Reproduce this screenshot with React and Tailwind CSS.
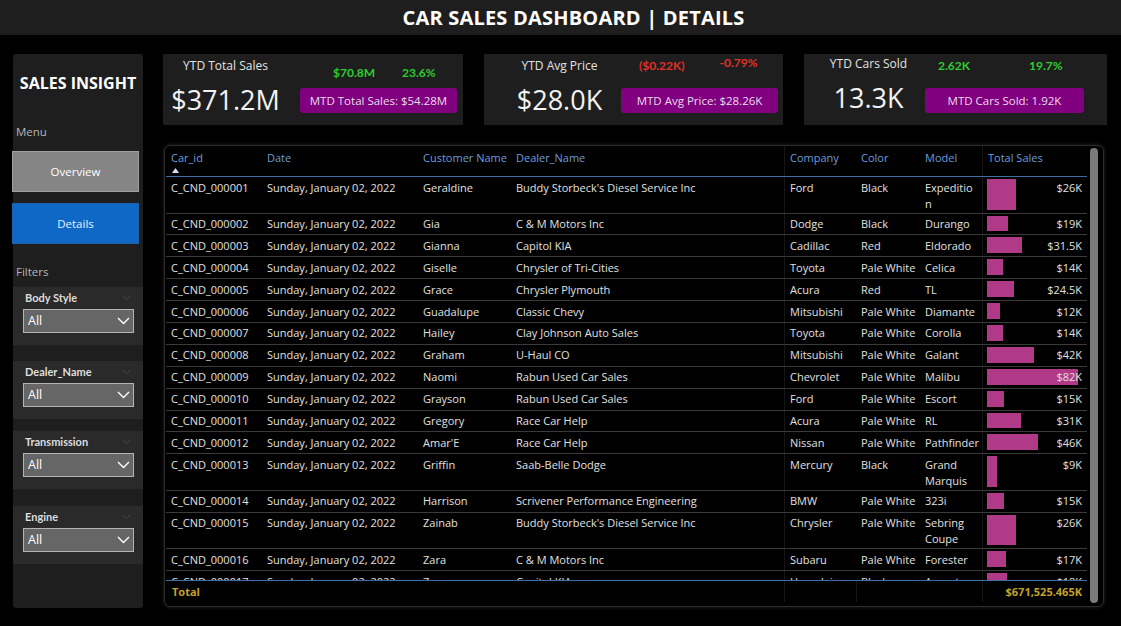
const kpis = [
  {
    title: 'YTD Total Sales',
    value: '$371.2M',
    d1: '$70.8M',
    d2: '23.6%',
    pill: 'MTD Total Sales: $54.28M',
    card: 'w-[300px]',
    left: 'ml-[3px] w-[119px] pt-[4px]',
    right: 'ml-[15px] w-[157px]',
    d1c: 'ml-[33px] mt-[11px] text-[#2ecc2e]',
    d2c: 'ml-[27px] mt-[11px] text-[#2ecc2e]',
  },
  {
    title: 'YTD Avg Price',
    value: '$28.0K',
    d1: '($0.22K)',
    d2: '-0.79%',
    pill: 'MTD Avg Price: $28.26K',
    card: 'w-[299px]',
    left: 'ml-[26px] w-[99px] pt-[4px]',
    right: 'ml-[12px] w-[157px]',
    d1c: 'ml-[18px] mt-[4px] text-[#e0302a]',
    d2c: 'ml-[35px] mt-[1px] text-[#e0302a]',
  },
  {
    title: 'YTD Cars Sold',
    value: '13.3K',
    d1: '2.62K',
    d2: '19.7%',
    pill: 'MTD Cars Sold: 1.92K',
    card: 'w-[303px]',
    left: 'ml-[20px] w-[89px] pt-[2px]',
    right: 'ml-[12px] w-[159px]',
    d1c: 'ml-[13px] mt-[4px] text-[#2ecc2e]',
    d2c: 'ml-[59px] mt-[4px] text-[#2ecc2e]',
  },
]

const rows = [
  ['C_CND_000001', 'Geraldine', "Buddy Storbeck's Diesel Service Inc", 'Ford', 'Black', ['Expeditio', 'n'], 26, '$26K'],
  ['C_CND_000002', 'Gia', 'C & M Motors Inc', 'Dodge', 'Black', ['Durango'], 19, '$19K'],
  ['C_CND_000003', 'Gianna', 'Capitol KIA', 'Cadillac', 'Red', ['Eldorado'], 31.5, '$31.5K'],
  ['C_CND_000004', 'Giselle', 'Chrysler of Tri-Cities', 'Toyota', 'Pale White', ['Celica'], 14, '$14K'],
  ['C_CND_000005', 'Grace', 'Chrysler Plymouth', 'Acura', 'Red', ['TL'], 24.5, '$24.5K'],
  ['C_CND_000006', 'Guadalupe', 'Classic Chevy', 'Mitsubishi', 'Pale White', ['Diamante'], 12, '$12K'],
  ['C_CND_000007', 'Hailey', 'Clay Johnson Auto Sales', 'Toyota', 'Pale White', ['Corolla'], 14, '$14K'],
  ['C_CND_000008', 'Graham', 'U-Haul CO', 'Mitsubishi', 'Pale White', ['Galant'], 42, '$42K'],
  ['C_CND_000009', 'Naomi', 'Rabun Used Car Sales', 'Chevrolet', 'Pale White', ['Malibu'], 82, '$82K'],
  ['C_CND_000010', 'Grayson', 'Rabun Used Car Sales', 'Ford', 'Pale White', ['Escort'], 15, '$15K'],
  ['C_CND_000011', 'Gregory', 'Race Car Help', 'Acura', 'Pale White', ['RL'], 31, '$31K'],
  ['C_CND_000012', "Amar'E", 'Race Car Help', 'Nissan', 'Pale White', ['Pathfinder'], 46, '$46K'],
  ['C_CND_000013', 'Griffin', 'Saab-Belle Dodge', 'Mercury', 'Black', ['Grand', 'Marquis'], 9, '$9K'],
  ['C_CND_000014', 'Harrison', 'Scrivener Performance Engineering', 'BMW', 'Pale White', ['323i'], 15, '$15K'],
  ['C_CND_000015', 'Zainab', "Buddy Storbeck's Diesel Service Inc", 'Chrysler', 'Pale White', ['Sebring', 'Coupe'], 26, '$26K'],
  ['C_CND_000016', 'Zara', 'C & M Motors Inc', 'Subaru', 'Pale White', ['Forester'], 17, '$17K'],
  ['C_CND_000017', 'Zoey', 'Capitol KIA', 'Hyundai', 'Black', ['Accent'], 18, '$18K'],
]

const grid = 'grid grid-cols-[96px_156px_93px_273px_72px_64px_62px_105px]'

function Chevron({ className }) {
  return (
    <svg className={className} width="13" height="8" viewBox="0 0 13 8" fill="none" stroke="currentColor" strokeWidth="1.4" aria-hidden>
      <path d="M1 1l5.5 5.5L12 1" />
    </svg>
  )
}

function Slicer({ label, className }) {
  return (
    <div className={`h-[58px] bg-[#2a2a2a] ${className}`}>
      <div className="flex items-center justify-between pl-[12px] pr-[12px] pt-[4px]">
        <span className="font-['Lato',sans-serif] text-[11px] font-bold leading-[14px] text-[#dedede]">{label}</span>
        <Chevron className="h-[6px] w-[9px] text-[#4a4a4a]" />
      </div>
      <div className="ml-[10px] mt-[4px] flex h-[24px] w-[111px] items-center justify-between border border-[#b4b4b4] bg-[#666666] pl-[4px] pr-[3px]">
        <span className="text-[12.5px] leading-none text-white">All</span>
        <Chevron className="text-white" />
      </div>
    </div>
  )
}

function Sidebar() {
  return (
    <aside className="ml-[13px] flex h-[554px] w-[130px] flex-col rounded-[3px] bg-[#1e1e1e]">
      <h2 className="pt-[19px] text-center text-[16px] font-bold leading-[20px] text-white">SALES INSIGHT</h2>
      <p className="mt-[31px] pl-[3px] text-[11.5px] leading-[16px] text-[#b5b5b5]">Menu</p>
      <button className="-ml-[1px] mt-[11px] h-[41px] w-[127px] border border-[#a0a0a0] bg-[#858585] text-[11.5px] text-white">
        Overview
      </button>
      <button className="-ml-[1px] mt-[11px] h-[41px] w-[127px] border border-[#1a5fa8] bg-[#1068c6] text-[11.5px] text-[#e6f2ff]">
        Details
      </button>
      <p className="mt-[20px] pl-[3px] text-[11.5px] leading-[16px] text-[#b5b5b5]">Filters</p>
      <Slicer label="Body Style" className="mt-[7px]" />
      <Slicer label="Dealer_Name" className="mt-[16px]" />
      <Slicer label="Transmission" className="mt-[12px]" />
      <Slicer label="Engine" className="mt-[17px]" />
    </aside>
  )
}

function KpiCard({ k }) {
  return (
    <div className={`flex h-[71px] bg-[#1e1e1e] ${k.card}`}>
      <div className={`flex flex-col items-center whitespace-nowrap ${k.left}`}>
        <span className="text-[12px] leading-[16px] text-[#e2e2e2]">{k.title}</span>
        <span className="mt-[9px] text-[27px] leading-[34px] text-[#f2f2f2]">{k.value}</span>
      </div>
      <div className={`flex flex-col ${k.right}`}>
        <div className="flex h-[34px] items-start whitespace-nowrap font-['Lato',sans-serif] text-[12px] font-bold leading-[16px]">
          <span className={k.d1c}>{k.d1}</span>
          <span className={k.d2c}>{k.d2}</span>
        </div>
        <div className="flex h-[25px] items-center justify-center whitespace-nowrap rounded-[3px] bg-[#800080] text-[11.5px] text-[#ecdcec]">
          {k.pill}
        </div>
      </div>
    </div>
  )
}

function Cell({ children, className = '' }) {
  return <div className={`whitespace-nowrap pb-[1px] pl-[5px] pr-[3px] pt-[2.5px] ${className}`}>{children}</div>
}

function DataTable() {
  const head = ['Car_id', 'Date', 'Customer Name', 'Dealer_Name', 'Company', 'Color', 'Model', 'Total Sales']
  return (
    <div className="ml-[1px] mt-[20px] flex h-[462px] w-[940px] rounded-[6px] border border-[#2c2c2c] bg-black pl-[1px] shadow-[0_0_4px_rgba(60,60,60,0.6)]">
      <div className="flex w-[921px] flex-col text-[11px] leading-[16px] text-[#e0e0e0]">
        <div className={`${grid} h-[31px] border-b border-[#3c6ea6] text-[#6a9fdc]`}>
          {head.map((h, i) => (
            <div key={h} className={`whitespace-nowrap pl-[5px] pt-[4px] ${i === 4 || i === 7 ? 'border-l border-[#161616]' : ''}`}>
              {h}
              {i === 0 && (
                <svg width="7" height="5" viewBox="0 0 7 5" className="ml-[1px] mt-[2px] block" aria-hidden>
                  <path d="M0 5L3.5 0L7 5Z" fill="#cfe0f5" />
                </svg>
              )}
            </div>
          ))}
        </div>
        <div className="h-[403px] overflow-hidden">
          {rows.map((r) => (
            <div key={r[0]} className={`${grid} min-h-[21.9px] border-b border-[#3a3a3a]`}>
              <Cell>{r[0]}</Cell>
              <Cell>Sunday, January 02, 2022</Cell>
              <Cell>{r[1]}</Cell>
              <Cell>{r[2]}</Cell>
              <Cell className="border-l border-[#161616]">{r[3]}</Cell>
              <Cell>{r[4]}</Cell>
              <Cell>
                {r[5].map((l) => (
                  <div key={l}>{l}</div>
                ))}
              </Cell>
              <div className="relative border-l border-[#161616] pb-[1px] pr-[5px] pt-[2.5px] text-right">
                <div
                  className="absolute bottom-[3px] left-[4px] top-[2px] bg-[#b03a87]"
                  style={{ width: `${Math.round(r[6] * 1.11)}px` }}
                />
                <span className="relative">{r[7]}</span>
              </div>
            </div>
          ))}
        </div>
        <div className={`${grid} h-[22px] border-t border-[#3c6ea6] font-bold text-[#c4a12a]`}>
          <div className="pl-[6px] pt-[3px]">Total</div>
          <div />
          <div />
          <div />
          <div className="border-l border-[#161616]" />
          <div className="border-l border-[#161616]" />
          <div />
          <div className="border-l border-[#161616] pr-[5px] pt-[3px] text-right">$671,525.465K</div>
        </div>
      </div>
      <div className="ml-[3px] mt-[2px] h-[455px] w-[8px] rounded-full bg-[#7a7a7a]" />
    </div>
  )
}

export default function App() {
  return (
    <div className="flex h-[626px] w-[1121px] flex-col overflow-hidden bg-black font-['Open_Sans',sans-serif]">
      <header className="flex h-[35px] items-center justify-center bg-[#1e1e1e] pl-[26px]">
        <h1 className="text-[20px] font-bold tracking-[0.2px] text-white">CAR SALES DASHBOARD | DETAILS</h1>
      </header>
      <div className="flex pt-[19px]">
        <Sidebar />
        <main className="ml-[20px] flex flex-col">
          <div className="flex gap-[21px]">
            {kpis.map((k) => (
              <KpiCard key={k.title} k={k} />
            ))}
          </div>
          <DataTable />
        </main>
      </div>
    </div>
  )
}
